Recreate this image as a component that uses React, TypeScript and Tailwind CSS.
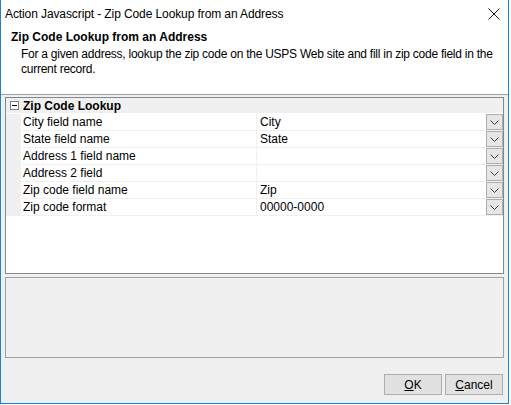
import React from "react";

const rows = [
  { name: "City field name", value: "City" },
  { name: "State field name", value: "State" },
  { name: "Address 1 field name", value: "" },
  { name: "Address 2 field", value: "" },
  { name: "Zip code field name", value: "Zip" },
  { name: "Zip code format", value: "00000-0000" },
];

const Chevron = () => (
  <svg width="9" height="5" viewBox="0 0 9 5" fill="none">
    <path d="M0.5 0.5 L4.5 4.5 L8.5 0.5" stroke="#404040" strokeWidth="1" />
  </svg>
);

const App = () => {
  return (
    <div
      className="w-[509px] h-[404px] bg-white border-l border-r border-b border-[#1883d7] flex flex-col text-[12px] text-black"
      style={{ fontFamily: "'Liberation Sans', Arial, sans-serif" }}
    >
      {/* title bar */}
      <div className="h-[30px] flex items-center justify-between pl-[4px] pr-[8px]">
        <span className="pb-[2px] tracking-[-0.1px]">Action Javascript - Zip Code Lookup from an Address</span>
        <svg width="12" height="12" viewBox="0 0 12 12" className="mb-[2px]">
          <path d="M0.5 0.5 L11.5 11.5 M11.5 0.5 L0.5 11.5" stroke="#111" strokeWidth="1" />
        </svg>
      </div>

      {/* header */}
      <div className="h-[65px] border-b border-[#a0a0a0] pl-[10px] leading-[15px]">
        <div className="font-bold mb-[2px]">Zip Code Lookup from an Address</div>
        <div className="pl-[10px] whitespace-nowrap tracking-[-0.25px]">
          For a given address, lookup the zip code on the USPS Web site and fill in zip code field in the
          <br />
          current record.
        </div>
      </div>

      {/* body */}
      <div className="flex-1 bg-[#f0f0f0] flex flex-col px-[4px] pt-[2px]">
        <div className="h-[177px] border border-[#828790] bg-white flex flex-col">
          <div className="h-[16px] bg-[#f0f0f0] flex items-center border-b border-white">
            <div className="w-[16px] flex justify-center">
              <div className="w-[9px] h-[9px] border border-[#808080] bg-white flex items-center justify-center">
                <div className="w-[5px] h-px bg-black" />
              </div>
            </div>
            <span className="font-bold pl-[1px]">Zip Code Lookup</span>
          </div>
          {rows.map((r) => (
            <div key={r.name} className="h-[17px] flex">
              <div className="w-[15px] bg-[#f0f0f0]" />
              <div className="w-[236px] border-b border-r border-[#f0f0f0] pl-[2px] flex items-center">
                {r.name}
              </div>
              <div className="flex-1 border-b border-[#f0f0f0] pl-[3px] flex items-center justify-between">
                <span>{r.value}</span>
                <div className="w-[17px] h-[16px] bg-[#e6e6e6] border border-[#adadad] flex items-center justify-center">
                  <Chevron />
                </div>
              </div>
            </div>
          ))}
        </div>

        <div className="mt-[3px] h-[81px] border border-[#a0a0a0] bg-[#f0f0f0]" />

        <div className="flex justify-end gap-[3px] mt-[16px] pr-[1px]">
          <button className="w-[58px] h-[21px] bg-[#e1e1e1] border border-[#adadad] flex items-center justify-center">
            <span>
              <span className="underline">O</span>K
            </span>
          </button>
          <button className="w-[58px] h-[21px] bg-[#e1e1e1] border border-[#adadad] flex items-center justify-center">
            <span>
              <span className="underline">C</span>ancel
            </span>
          </button>
        </div>
      </div>
    </div>
  );
};

export default App;
